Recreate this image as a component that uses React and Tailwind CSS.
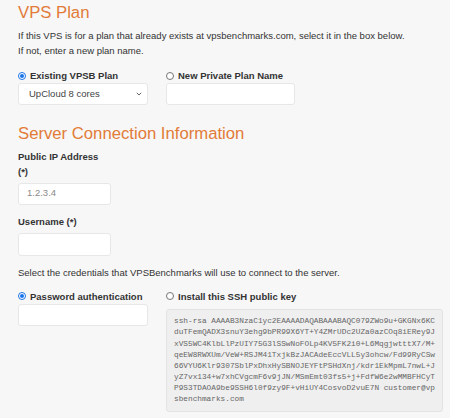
import React from "react";

// Small custom radio, drawn to match the browser's native look
const Radio = ({ checked }) =>
  checked ? (
    <span className="flex h-[8px] w-[8px] shrink-0 items-center justify-center rounded-full border border-[#1b74e8] bg-white">
      <span className="h-[4px] w-[4px] rounded-full bg-[#1b74e8]"></span>
    </span>
  ) : (
    <span className="h-[8px] w-[8px] shrink-0 rounded-full border border-[#767676] bg-white"></span>
  );

const RadioLabel = ({ checked, children }) => (
  <div className="flex h-[15px] items-center gap-[4px] text-[9.5px] font-bold leading-[15px] text-[#333]">
    <Radio checked={checked} />
    <span>{children}</span>
  </div>
);

const Field = ({ className = "", children }) => (
  <div
    className={`rounded-[3px] border border-[#e7e7e7] bg-white text-[9.5px] ${className}`}
  >
    {children}
  </div>
);

const SSH_KEY =
  "ssh-rsa AAAAB3NzaC1yc2EAAAADAQABAAABAQC079ZWo9u+GKGNx6KCduTFemQADX3snuY3ehg9bPR99X6YT+Y4ZMrUDc2UZa0azCOq8iERey9JxVS5WC4KlbLlPzUIY75G3lSSwNoFOLp4KV5FK2i0+L6MqgjwtttX7/M+qeEW8RWXUm/VeW+RSJM41TxjkBzJACAdeEccVLL5y3ohcw/Fd99RyCSw66VYU6Klr9307SblPxDhxHySBNOJEYFtPSHdXnj/kdr1EkMpmL7nwL+JyZ7vx134+w7xhCVgcmF6v9jJN/MSmEmt03fs5+j+FdfW6e2wMMBFHCyTP9S3TDAOA9be9SSH6l0f9zy9F+vHiUY4CosvoD2vuE7N customer@vpsbenchmarks.com";

export default function App() {
  return (
    <div className="min-h-screen bg-[#f7f7f7] pl-[18px] pr-[7px] font-['Liberation_Sans',Arial,sans-serif] text-[#333]">
      {/* VPS Plan */}
      <h2 className="pt-[3px] text-[16.7px] leading-[20px] font-normal text-[#e27b38]">
        VPS Plan
      </h2>
      <p className="mt-[5px] text-[9.5px] leading-[15px] text-[#333]">
        If this VPS is for a plan that already exists at vpsbenchmarks.com, select it in the box below.
        <br />
        If not, enter a new plan name.
      </p>

      <div className="mt-[10px] flex gap-[18px]">
        <div className="w-[130px]">
          <RadioLabel checked>Existing VPSB Plan</RadioLabel>
          <Field className="flex h-[22px] items-center justify-between pl-[10px] pr-[5px] text-[#444]">
            <span>UpCloud 8 cores</span>
            <svg width="6" height="4" viewBox="0 0 6 4" className="text-[#555]">
              <path d="M0.8 0.8 L3 3 L5.2 0.8" fill="none" stroke="currentColor" strokeWidth="0.9" />
            </svg>
          </Field>
        </div>
        <div className="w-[129px]">
          <RadioLabel>New Private Plan Name</RadioLabel>
          <Field className="h-[22px]" />
        </div>
      </div>

      {/* Server Connection Information */}
      <h2 className="mt-[18.5px] text-[16.7px] leading-[20px] font-normal text-[#e27b38]">
        Server Connection Information
      </h2>

      <div className="mt-[5px] w-[92px] text-[9.5px] font-bold leading-[15px]">
        Public IP Address (*)
      </div>
      <Field className="mt-[4px] flex h-[22px] w-[93px] items-center pl-[8px] text-[#8a8a8a]">
        1.2.3.4
      </Field>

      <div className="mt-[9.6px] text-[9.5px] font-bold leading-[15px]">Username (*)</div>
      <Field className="mt-[4.4px] h-[22.5px] w-[93px]" />

      <p className="mt-[9px] text-[9.5px] leading-[15px]">
        Select the credentials that VPSBenchmarks will use to connect to the server.
      </p>

      <div className="mt-[9px] flex gap-[18px]">
        <div className="w-[130px] shrink-0">
          <RadioLabel checked>Password authentication</RadioLabel>
          <Field className="h-[22.5px]" />
        </div>
        <div className="flex-1">
          <RadioLabel>Install this SSH public key</RadioLabel>
          <div className="mt-[5.4px] rounded-[3px] border border-[#e3e3e3] bg-[#efefef] pl-[7px] pr-[3px] pt-[6px] pb-[6px] font-['Liberation_Mono','Courier_New',monospace] text-[7.77px] leading-[11.1px] text-[#666] whitespace-pre-wrap break-all">
            {SSH_KEY}
          </div>
        </div>
      </div>
    </div>
  );
}
